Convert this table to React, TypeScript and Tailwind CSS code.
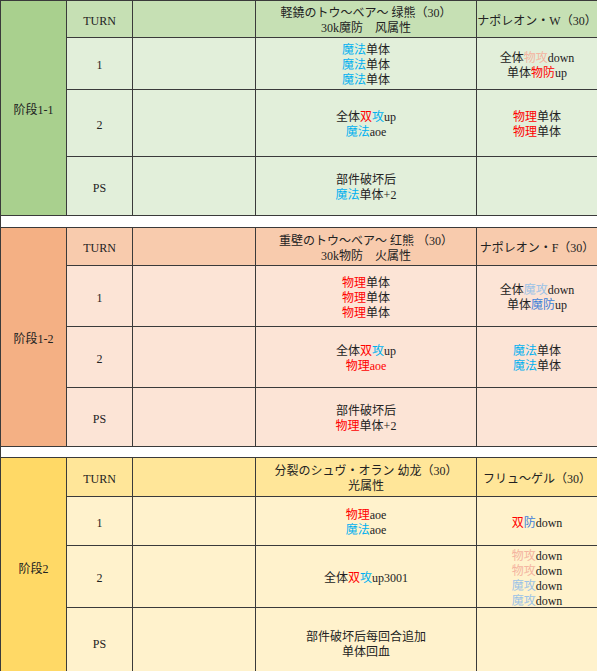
import React from "react";

type Seg = [string, string?];
type Line = Seg[];

const R = "text-[#ff0000]";
const LB = "text-[#00b0f0]";
const BL = "text-[#3f7fd8]";
const PB = "text-[#9bc2e6]";
const PE = "text-[#f4b4a0]";

type Section = {
  label: string;
  stage: string;
  head: string;
  body: string;
  rows: string;
  title: string[];
  ally: string;
  cells: { turn: string; enemy: Line[]; ally: Line[] }[];
};

const sections: Section[] = [
  {
    label: "阶段1-1",
    stage: "bg-[#a9d08e]",
    head: "bg-[#c6e0b4]",
    body: "bg-[#e2efda]",
    rows: "grid-rows-[37px_52px_67px_59px]",
    title: ["軽鐃のトウ〜ベア〜 绿熊（30）", "30k魔防　风属性"],
    ally: "ナポレオン・W（30）",
    cells: [
      {
        turn: "1",
        enemy: [
          [["魔法", LB], ["单体"]],
          [["魔法", LB], ["单体"]],
          [["魔法", LB], ["单体"]],
        ],
        ally: [
          [["全体"], ["物攻", PE], ["down"]],
          [["单体"], ["物防", R], ["up"]],
        ],
      },
      {
        turn: "2",
        enemy: [
          [["全体"], ["双", R], ["攻", LB], ["up"]],
          [["魔法", LB], ["aoe"]],
        ],
        ally: [
          [["物理", R], ["单体"]],
          [["物理", R], ["单体"]],
        ],
      },
      {
        turn: "PS",
        enemy: [[["部件破坏后"]], [["魔法", LB], ["单体+2"]]],
        ally: [],
      },
    ],
  },
  {
    label: "阶段1-2",
    stage: "bg-[#f4b084]",
    head: "bg-[#f8cbad]",
    body: "bg-[#fce4d6]",
    rows: "grid-rows-[38px_61px_61px_59px]",
    title: ["重壁のトウ〜ベア〜 红熊 （30）", "30k物防　火属性"],
    ally: "ナポレオン・F（30）",
    cells: [
      {
        turn: "1",
        enemy: [
          [["物理", R], ["单体"]],
          [["物理", R], ["单体"]],
          [["物理", R], ["单体"]],
        ],
        ally: [
          [["全体"], ["魔攻", PB], ["down"]],
          [["单体"], ["魔防", BL], ["up"]],
        ],
      },
      {
        turn: "2",
        enemy: [
          [["全体"], ["双", R], ["攻", LB], ["up"]],
          [["物理aoe", R]],
        ],
        ally: [
          [["魔法", LB], ["单体"]],
          [["魔法", LB], ["单体"]],
        ],
      },
      {
        turn: "PS",
        enemy: [[["部件破坏后"]], [["物理", R], ["单体+2"]]],
        ally: [],
      },
    ],
  },
  {
    label: "阶段2",
    stage: "bg-[#ffd966]",
    head: "bg-[#ffe699]",
    body: "bg-[#fff2cc]",
    rows: "grid-rows-[39px_49px_62px_70px]",
    title: ["分裂のシュヴ・オラン 幼龙（30）", "光属性"],
    ally: "フリュ〜ゲル（30）",
    cells: [
      {
        turn: "1",
        enemy: [
          [["物理", R], ["aoe"]],
          [["魔法", LB], ["aoe"]],
        ],
        ally: [[["双", R], ["防", BL], ["down"]]],
      },
      {
        turn: "2",
        enemy: [[["全体"], ["双", R], ["攻", LB], ["up3001"]]],
        ally: [
          [["物攻", PE], ["down"]],
          [["物攻", PE], ["down"]],
          [["魔攻", PB], ["down"]],
          [["魔攻", PB], ["down"]],
        ],
      },
      {
        turn: "PS",
        enemy: [[["部件破坏后每回合追加"]], [["单体回血"]]],
        ally: [],
      },
    ],
  },
];

function Lines({ lines }: { lines: Line[] }) {
  return (
    <div className="flex flex-col items-center">
      {lines.map((line, i) => (
        <div key={i} className="whitespace-pre">
          {line.map((seg, j) => (
            <span key={j} className={seg[1] ?? ""}>
              {seg[0]}
            </span>
          ))}
        </div>
      ))}
    </div>
  );
}

const cell = "border-r border-b border-[#3a3a3a] flex items-center justify-center pt-[4px]";

function SectionBlock({ s }: { s: Section }) {
  const titleLines: Line[] = s.title.map((t) => [[t]] as Line);
  return (
    <div className={`grid grid-cols-[66px_66px_123px_221px_1fr] ${s.rows} border-t border-[#3a3a3a]`}>
      <div className={`row-span-4 ${cell} ${s.stage}`}>{s.label}</div>
      <div className={`${cell} ${s.head}`}>TURN</div>
      <div className={`${cell} ${s.head}`}></div>
      <div className={`${cell} ${s.head}`}>
        <Lines lines={titleLines} />
      </div>
      <div className={`${cell} ${s.head} border-r-0`}>{s.ally}</div>
      {s.cells.map((c, i) => (
        <React.Fragment key={i}>
          <div className={`${cell} ${s.body}`}>{c.turn}</div>
          <div className={`${cell} ${s.body}`}></div>
          <div className={`${cell} ${s.body}`}>
            <Lines lines={c.enemy} />
          </div>
          <div className={`${cell} ${s.body} border-r-0`}>
            <Lines lines={c.ally} />
          </div>
        </React.Fragment>
      ))}
    </div>
  );
}

export default function App() {
  return (
    <div className="w-[597px] h-[671px] overflow-hidden bg-white border-l border-[#3a3a3a] font-['Liberation_Serif','Noto_Sans_CJK_SC',serif] text-[12px] leading-[15px] text-[#222222]">
      <SectionBlock s={sections[0]} />
      <div className="h-[11px]" />
      <SectionBlock s={sections[1]} />
      <div className="h-[10px]" />
      <SectionBlock s={sections[2]} />
    </div>
  );
}
